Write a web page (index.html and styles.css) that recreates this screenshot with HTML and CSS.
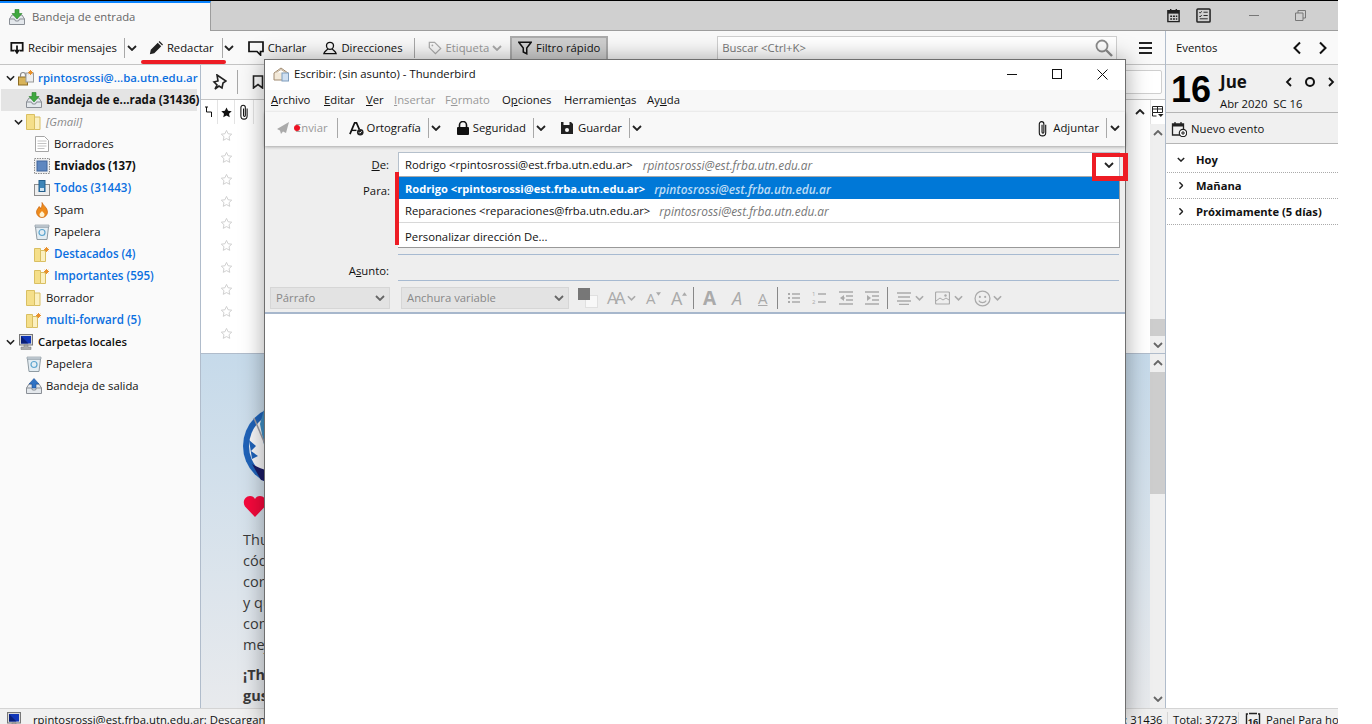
FILE: index.html
```html
<!doctype html>
<html>

	<head>
		<title>Bandeja de entrada</title>
		<meta charset="utf-8" />
		<link rel="stylesheet" href="styles.css">
	</head>

	<body>

		<svg class="sprite">
			<symbol id="chev" viewBox="0 0 10 6"><path d="M1 1l4 4 4-4" fill="none" stroke="currentColor" stroke-width="1.800"/></symbol>
			<symbol id="chevup" viewBox="0 0 10 6"><path d="M1 5l4-4 4 4" fill="none" stroke="currentColor" stroke-width="1.800"/></symbol>
			<symbol id="inbox" viewBox="0 0 16 16"><path d="M.5 10l2.500-4h10l2.500 4v5.500H.5z" fill="#e4e8ec" stroke="#8a8f96"/><path d="M.5 10h5l1 2h3l1-2h5" fill="none" stroke="#8a8f96"/><path d="M6 .5h4v4h3L8 10 3 4.500h3z" fill="#3fa83f" stroke="#2b7f2b" stroke-width=".6"/></symbol>
			<symbol id="outbox" viewBox="0 0 16 16"><path d="M.5 10l2.500-4h10l2.500 4v5.500H.5z" fill="#e4e8ec" stroke="#8a8f96"/><path d="M.5 10h5l1 2h3l1-2h5" fill="none" stroke="#8a8f96"/><path d="M6 10V6H3L8 .5 13 6h-3v4z" fill="#2f72c4" stroke="#1d4f94" stroke-width=".6"/></symbol>
			<symbol id="folder" viewBox="0 0 16 16"><path d="M.5 .5h8v15h-8z" fill="#f5df8a" stroke="#d9bf62"/><path d="M8.500 3h5.500v12.500H8.500z" fill="#fbf0c0" stroke="#d9bf62"/></symbol>
			<symbol id="vfolder" viewBox="0 0 16 16"><path d="M.5 2.500h6v13h-6z" fill="#f5df8a" stroke="#d9bf62"/><path d="M6.500 4.500h5v11h-5z" fill="#fbf0c0" stroke="#d9bf62"/><path d="M12.500 1v5M10 3.500h5M10.800 1.800l3.400 3.400M14.200 1.800l-3.400 3.400" stroke="#e8912c"/></symbol>
			<symbol id="doc" viewBox="0 0 16 16"><path d="M1.500 .5h9l4 4v11h-13z" fill="#fff" stroke="#a5a5a5"/><path d="M3.500 5h9M3.500 7.500h9M3.500 10h9M3.500 12.500h7" stroke="#c4c4c4"/></symbol>
			<symbol id="sent" viewBox="0 0 16 16"><rect x=".5" y=".5" width="15" height="15" fill="#eee" stroke="#8d8d8d" stroke-dasharray="1.500 1"/><rect x="3" y="3" width="10" height="10" fill="#5e87c0" stroke="#3f659c"/></symbol>
			<symbol id="archive" viewBox="0 0 16 16"><rect x=".5" y="4.500" width="15" height="11" fill="#eee" stroke="#8d8d8d"/><rect x="5" y=".5" width="6" height="11" fill="#3d85b8" stroke="#235f8c"/><rect x="6" y="8" width="4" height="3" fill="#cfe4f2"/></symbol>
			<symbol id="flame" viewBox="0 0 16 16"><path d="M8 .5c1 3 5.500 5 5.500 9.500a5.500 5.500 0 0 1-11 0C2.500 7.500 4.500 6.500 5 4.500c1 .5 1.500 1.500 1.500 2.500C7.500 5.500 8.500 3 8 .5z" fill="#ee8b1c" stroke="#c9640f" stroke-width=".7"/><path d="M8 9c1 1.500 2.500 2 2.500 3.500a2.500 2.500 0 0 1-5 0C5.500 11 7 10.500 8 9z" fill="#fff2d0"/></symbol>
			<symbol id="trash" viewBox="0 0 16 16"><path d="M1.500 3h13l-1.500 12.500H3z" fill="#e3edf3" stroke="#8f9ba3"/><path d="M1 1h14v2H1z" fill="#cfd9e0" stroke="#8f9ba3" stroke-width=".7"/><circle cx="8" cy="8.500" r="3" fill="none" stroke="#5ea6cf" stroke-width="1.200"/></symbol>
			<symbol id="pc" viewBox="0 0 16 16"><rect x="1.500" y=".5" width="13" height="10.500" fill="#d9d9d9" stroke="#777"/><rect x="3" y="2" width="10" height="7.500" fill="#1036b8"/><path d="M3 2l7.500 7.500H3z" fill="#0a1f78"/><path d="M6 11h4v2h3v2.500H3V13h3z" fill="#aaa" stroke="#777" stroke-width=".5"/></symbol>
			<symbol id="lockmail" viewBox="0 0 16 16"><rect x=".5" y="7" width="9" height="8" fill="#d9b45a" stroke="#8c6c24"/><path d="M2.500 7V5a2.500 2.500 0 0 1 5 0v2" fill="none" stroke="#888" stroke-width="1.200"/><rect x="8" y="3" width="7.500" height="9" fill="#eee" stroke="#999"/><path d="M12.500 0v5M10 2.500h5M10.800 .8l3.400 3.400M14.200 .8l-3.400 3.400" stroke="#e8912c"/></symbol>
			<symbol id="star" viewBox="0 0 14 14"><path d="M7 1.500l1.700 3.600 3.900.5-2.900 2.700.8 3.900L7 10.300l-3.500 1.900.8-3.900L1.400 5.600l3.900-.5z"/></symbol>
			<symbol id="clip" viewBox="0 0 12 18"><path d="M9.500 5v8.500a3.500 3.500 0 0 1-7 0V4a2.500 2.500 0 0 1 5 0v9a1 1 0 0 1-2 0V5" fill="none" stroke="currentColor" stroke-width="1.200"/></symbol>
		</svg>

		<div class="app">
			<div class="tabbar">
				<div class="tab">
					<svg class="ico16"><use href="#inbox"/></svg>
					<span>Bandeja de entrada</span>
				</div>
				<div class="tabtools">
					<svg class="ico15" viewBox="0 0 16 16"><path d="M2 3h12v11.500H2z" fill="none" stroke="#222" stroke-width="1.500"/><path d="M2 3h12v3H2z" fill="#222"/><path d="M5 1v3M11 1v3" stroke="#222" stroke-width="1.500"/><path d="M4.500 8h2v1.500h-2zM7.500 8h2v1.500h-2zM10.500 8h1.500v1.500h-1.500zM4.500 11h2v1.500h-2zM7.500 11h2v1.500h-2zM10.500 11h1.500v1.500h-1.500z" fill="#222"/></svg>
					<svg class="ico15 tasks" viewBox="0 0 16 16"><rect x="1" y="1" width="14" height="14" rx="1" fill="none" stroke="#222" stroke-width="1.600"/><path d="M3.500 4.500l1 1 1.500-2M3.500 8.500l1 1 1.500-2M8 4.500h4.500M8 8h4.500M4 11.500h8.500" fill="none" stroke="#222"/></svg>
					<span class="tab-min"></span>
					<svg class="tab-restore" viewBox="0 0 11 11"><path d="M.5 3h7.500v7.500H.5zM3 3V.5h7.500V8H8" fill="none" stroke="#777"/></svg>
				</div>
			</div>

			<div class="toolbar">
				<button class="tb ml10">
					<svg class="ico14" viewBox="0 0 16 16"><path d="M5 11H1.500V2h13v9H11" fill="none" stroke="#111" stroke-width="2"/><path d="M8 5v9" stroke="#111" stroke-width="2"/><path d="M4.500 10L8 15l3.500-5z" fill="#111"/></svg>
					Recibir mensajes
				</button>
				<i class="sep ml7"></i>
				<svg class="chev ml2"><use href="#chev"/></svg>
				<button class="tb ml12">
					<svg class="ico14" viewBox="0 0 16 16"><path d="M1 15l1-5 8-8 4 4-8 8zM11 1l1-1 4 4-1 1z" fill="#222"/></svg>
					Redactar
				</button>
				<i class="sep ml8"></i>
				<svg class="chev ml1"><use href="#chev"/></svg>
				<button class="tb ml14">
					<svg class="ico16" viewBox="0 0 16 16"><path d="M1 2h14v9.500h-2.500V15L9 11.500H1z" fill="none" stroke="#111" stroke-width="1.700"/></svg>
					Charlar
				</button>
				<button class="tb ml17">
					<svg class="ico14" viewBox="0 0 16 16"><circle cx="8" cy="5.500" r="4" fill="none" stroke="#111" stroke-width="1.500"/><path d="M5.500 9C4 11 1.500 11.500 1 14.500h14c-.5-3-3-3.500-4.500-5.500" fill="none" stroke="#111" stroke-width="1.500"/></svg>
					Direcciones
				</button>
				<i class="sep ml11"></i>
				<button class="tb off ml13">
					<svg class="ico14" viewBox="0 0 16 16"><path d="M1.500 1.500h6l7 7-6 6-7-7z" fill="none" stroke="#aaa" stroke-width="1.400"/><circle cx="5" cy="5" r="1" fill="#aaa"/></svg>
					Etiqueta
				</button>
				<svg class="chev ml3 off"><use href="#chev"/></svg>
				<button class="tb filter">
					<svg class="ico14" viewBox="0 0 16 16"><path d="M1 1.500h14L10 8v6.500l-4-2V8z" fill="none" stroke="#111" stroke-width="1.700"/></svg>
					Filtro rápido
				</button>
				<div class="search">
					<span>Buscar &lt;Ctrl+K&gt;</span>
					<svg class="ico18" viewBox="0 0 18 18"><circle cx="7" cy="7" r="5.500" fill="none" stroke="#8c8c8c" stroke-width="1.800"/><path d="M11 11l6 6" stroke="#8c8c8c" stroke-width="2.400"/></svg>
				</div>
				<div class="burger"><i></i><i></i><i></i></div>
			</div>

			<div class="main">
				<div class="sidebar">
					<div class="row blue account indent0"><svg class="chev tw"><use href="#chev"/></svg><svg class="ico16"><use href="#lockmail"/></svg><span>rpintosrossi@...ba.utn.edu.ar</span></div>
					<div class="row sel indent1"><svg class="ico16"><use href="#inbox"/></svg><span class="b">Bandeja de e...rada (31436)</span></div>
					<div class="row indent0b"><svg class="chev tw"><use href="#chev"/></svg><svg class="ico16"><use href="#folder"/></svg><span class="gm">[Gmail]</span></div>
					<div class="row indent2"><svg class="ico16"><use href="#doc"/></svg><span>Borradores</span></div>
					<div class="row indent2"><svg class="ico16"><use href="#sent"/></svg><span class="b">Enviados (137)</span></div>
					<div class="row indent2 blue"><svg class="ico16"><use href="#archive"/></svg><span>Todos (31443)</span></div>
					<div class="row indent2"><svg class="ico16"><use href="#flame"/></svg><span>Spam</span></div>
					<div class="row indent2"><svg class="ico16"><use href="#trash"/></svg><span>Papelera</span></div>
					<div class="row indent2 blue"><svg class="ico16"><use href="#vfolder"/></svg><span>Destacados (4)</span></div>
					<div class="row indent2 blue"><svg class="ico16"><use href="#vfolder"/></svg><span>Importantes (595)</span></div>
					<div class="row indent1"><svg class="ico16"><use href="#folder"/></svg><span>Borrador</span></div>
					<div class="row indent1 blue"><svg class="ico16"><use href="#vfolder"/></svg><span>multi-forward (5)</span></div>
					<div class="row indent0 local"><svg class="chev tw"><use href="#chev"/></svg><svg class="ico16"><use href="#pc"/></svg><span>Carpetas locales</span></div>
					<div class="row indent1"><svg class="ico16"><use href="#trash"/></svg><span>Papelera</span></div>
					<div class="row indent1"><svg class="ico16"><use href="#outbox"/></svg><span>Bandeja de salida</span></div>
				</div>

				<div class="content">
					<div class="threads">
						<div class="qfbar">
							<svg class="ico16 pin" viewBox="0 0 16 16"><path d="M6 1l9 6-3 2-1 5-3-2-4 3 2-4-3-3 4-1z" fill="none" stroke="#222" stroke-width="1.600"/></svg>
							<i class="sep qfsep"></i>
							<svg class="ico14 mark" viewBox="0 0 14 14"><path d="M2.500 1h9v12L7 9.500 2.500 13z" fill="none" stroke="#222" stroke-width="1.600"/></svg>
							<div class="qfsearch"></div>
						</div>
						<div class="thead">
							<span class="col c1">
								<svg class="ico10" viewBox="0 0 10 12"><path d="M2.500 1v5h5v5M1 1h3" fill="none" stroke="#111"/></svg>
							</span>
							<span class="col c2"><svg class="ico13 starfull"><use href="#star"/></svg></span>
							<span class="col c3"><svg class="clip12"><use href="#clip"/></svg></span>
							<span class="thead-fill">
								<svg class="chev"><use href="#chevup"/></svg>
							</span>
							<span class="col c4">
								<svg class="ico12" viewBox="0 0 12 12"><path d="M.5 .5h10v6H.5zM.5 3h10M5.500 .5v6M.5 6.500V10h4" fill="none" stroke="#222"/><path d="M6 8h5.500l-2.700 3z" fill="#222"/></svg>
							</span>
						</div>
						<div class="tbody">
							<div class="starcol">
								<svg class="ico13 st"><use href="#star"/></svg>
								<svg class="ico13 st"><use href="#star"/></svg>
								<svg class="ico13 st"><use href="#star"/></svg>
								<svg class="ico13 st"><use href="#star"/></svg>
								<svg class="ico13 st"><use href="#star"/></svg>
								<svg class="ico13 st"><use href="#star"/></svg>
								<svg class="ico13 st"><use href="#star"/></svg>
								<svg class="ico13 st"><use href="#star"/></svg>
								<svg class="ico13 st"><use href="#star"/></svg>
								<svg class="ico13 st"><use href="#star"/></svg>
							</div>
							<div class="vscroll short">
								<svg class="chev"><use href="#chevup"/></svg>
								<div class="track"><div class="thumb"></div></div>
								<svg class="chev"><use href="#chev"/></svg>
							</div>
						</div>
					</div>

					<div class="message">
						<div class="msgbody">
							<svg class="logo" viewBox="0 0 84 84">
								<circle cx="40" cy="42" r="40" fill="#1f62b8"/>
								<circle cx="40" cy="42" r="34" fill="#f6f6f8"/>
								<path d="M22 2L17 20l5 26z" fill="#3f8fc4"/>
								<path d="M11 14l11 26" stroke="#9a9aa4" stroke-width="1.500"/>
								<path d="M6 36l7 6-5 5 7 5-6 3z" fill="#1f62b8"/>
								<path d="M9 60c10 6 22 9 40 8L40 82 18 76z" fill="#1c1c66"/>
							</svg>
							<svg class="heart" viewBox="0 0 24 22"><path d="M12 21L2 10.500C-1 6 2 0 7 0c2.500 0 4 1 5 3 1-2 2.500-3 5-3 5 0 8 6 5 10.500z" fill="#f5093c"/></svg>
							<p>Thunderbird es el software de correo libre<br>código abierto, multiplataforma y gratuito<br>correo electrónico respaldado por miles de<br>y que depende de las contribuciones de la<br>comunidad para seguir mejorando cada<br>mejor experiencia posible para todos</p>
							<p class="strong">¡Thunderbird solo existe gracias a ti! Si te<br>gusta, considera hacer una donación</p>
						</div>
						<div class="vscroll">
							<svg class="chev"><use href="#chevup"/></svg>
							<div class="track"><div class="thumb"></div></div>
							<svg class="chev"><use href="#chev"/></svg>
						</div>
					</div>
				</div>

				<div class="today">
					<div class="today-head">
						<span>Eventos</span>
						<svg class="nav nav1" viewBox="0 0 10 14"><path d="M8 1.500L2.500 7 8 12.500" fill="none" stroke="#111" stroke-width="2"/></svg>
						<svg class="nav nav2" viewBox="0 0 10 14"><path d="M2 1.500L7.500 7 2 12.500" fill="none" stroke="#111" stroke-width="2"/></svg>
					</div>
					<div class="today-date">
						<span class="bignum">16</span>
						<div class="datecol">
							<div class="dayrow">
								<span class="dayname">Jue</span>
								<span class="daynav">
									<svg viewBox="0 0 8 10"><path d="M6 1L2 5l4 4" fill="none" stroke="#111" stroke-width="1.800"/></svg>
									<i class="dot"></i>
									<svg viewBox="0 0 8 10"><path d="M2 1l4 4-4 4" fill="none" stroke="#111" stroke-width="1.800"/></svg>
								</span>
							</div>
							<span class="monthrow">Abr 2020&nbsp; SC 16</span>
						</div>
					</div>
					<div class="newevent">
						<svg class="ico16" viewBox="0 0 16 16"><path d="M1.500 3h11v11H1.500z" fill="none" stroke="#222" stroke-width="1.300"/><path d="M1.500 3h11v2.500h-11z" fill="#222"/><path d="M4 1v3M10 1v3" stroke="#222" stroke-width="1.300"/><circle cx="12" cy="12" r="3.700" fill="#fff" stroke="#222" stroke-width="1.200"/><path d="M12 10v4M10 12h4" stroke="#222"/></svg>
						<span>Nuevo evento</span>
					</div>
					<div class="agenda">
						<div class="agenda-row"><svg class="chev small"><use href="#chev"/></svg><span>Hoy</span></div>
						<div class="agenda-row"><svg class="chev small side"><use href="#chev"/></svg><span>Mañana</span></div>
						<div class="agenda-row"><svg class="chev small side"><use href="#chev"/></svg><span>Próximamente (5 días)</span></div>
					</div>
				</div>
			</div>

			<div class="status">
				<svg class="ico16 st-pc"><use href="#pc"/></svg>
				<span class="st-text">rpintosrossi@est.frba.utn.edu.ar: Descargando mensajes</span>
				<span class="st-cell st-unread">No leídos: 31436</span>
				<span class="st-cell st-total">Total: 37273</span>
				<span class="st-cell st-panel">
					<svg class="ico16" viewBox="0 0 16 16"><path d="M3 2H1.500v12.500H3M13 2h1.500v12.500H13M4 1.500h8" fill="none" stroke="#222" stroke-width="1.400"/><text x="8" y="13" font-size="9" font-weight="700" text-anchor="middle" fill="#222">16</text></svg>
					Panel Para hoy
				</span>
			</div>

			<div class="mark-under"></div>
		</div>

		<div class="compose">
			<div class="c-title">
				<svg class="ico16" viewBox="0 0 16 16"><path d="M1 7l7-5 7 5v7H1z" fill="#f3e9d8" stroke="#a08a70"/><path d="M3.500 6.500L8 3.500l4.500 3" fill="#fff" stroke="#c4b49c"/><rect x="9" y="7" width="6.500" height="8" fill="#cfe0f2" stroke="#7f9dbd"/></svg>
				<span class="c-caption">Escribir: (sin asunto) - Thunderbird</span>
				<span class="w-min"></span>
				<span class="w-max"></span>
				<svg class="w-close" viewBox="0 0 11 11"><path d="M.5 .5l10 10M10.500 .5l-10 10" stroke="#111"/></svg>
			</div>
			<div class="c-menu">
				<span class="m1"><u>A</u>rchivo</span>
				<span class="m2"><u>E</u>ditar</span>
				<span class="m3"><u>V</u>er</span>
				<span class="m4 dim"><u>I</u>nsertar</span>
				<span class="m5 dim">F<u>o</u>rmato</span>
				<span class="m6">O<u>p</u>ciones</span>
				<span class="m7">Herramien<u>t</u>as</span>
				<span class="m8">Ay<u>u</u>da</span>
			</div>
			<div class="c-tools">
				<button class="tb off send">
					<svg class="ico14" viewBox="0 0 14 14"><path d="M13 1L1 8l3 1.500L5 13l2-2.500 3 1.500z" fill="#aaa"/></svg>
					Enviar
				</button>
				<i class="sep s1"></i>
				<button class="tb spell">
					<svg class="ico15" viewBox="0 0 16 16"><path d="M1 14L6 2h2l3 7" fill="none" stroke="#111" stroke-width="1.800"/><path d="M3 10h5" stroke="#111" stroke-width="1.500"/><circle cx="12" cy="12" r="3.500" fill="#222"/><path d="M10.500 12l1 1 2-2" fill="none" stroke="#fff"/></svg>
					Ortografía
				</button>
				<i class="sep s2"></i>
				<svg class="chev ml2"><use href="#chev"/></svg>
				<button class="tb secu">
					<svg class="ico14" viewBox="0 0 14 14"><rect x="1" y="6" width="12" height="8" rx="1" fill="#111"/><path d="M3.500 6V4a3.500 3.500 0 0 1 7 0v2" fill="none" stroke="#111" stroke-width="1.600"/></svg>
					Seguridad
				</button>
				<i class="sep s3"></i>
				<svg class="chev ml2"><use href="#chev"/></svg>
				<button class="tb save">
					<svg class="ico14" viewBox="0 0 14 14"><path d="M1 1h10l2 2v10H1z" fill="#222"/><rect x="3.500" y="1" width="6" height="3" fill="#f9f9f9"/><circle cx="7" cy="9" r="2" fill="#f9f9f9"/></svg>
					Guardar
				</button>
				<i class="sep s4"></i>
				<svg class="chev ml2"><use href="#chev"/></svg>
				<button class="tb attach">
					<svg class="clip16"><use href="#clip"/></svg>
					Adjuntar
				</button>
				<i class="sep s5"></i>
				<svg class="chev ml3 last-chev"><use href="#chev"/></svg>
				<i class="reddot"></i>
			</div>

			<div class="c-head">
				<div class="h-row h-from">
					<label class="h-label"><u>D</u>e:</label>
					<div class="from-field">
						<span class="fname">Rodrigo &lt;rpintosrossi@est.frba.utn.edu.ar&gt;</span>
						<em>rpintosrossi@est.frba.utn.edu.ar</em>
						<svg class="chev from-chev"><use href="#chev"/></svg>
					</div>
				</div>
				<div class="h-row h-to">
					<label class="h-label para">Para:</label>
				</div>
				<div class="h-line line1"></div>
				<div class="h-row h-subj">
					<label class="h-label">A<u>s</u>unto:</label>
				</div>
				<div class="h-line"></div>

				<div class="popup">
					<div class="pitem on"><span>Rodrigo &lt;rpintosrossi@est.frba.utn.edu.ar&gt;</span><em>rpintosrossi@est.frba.utn.edu.ar</em></div>
					<div class="pitem second"><span>Reparaciones &lt;reparaciones@frba.utn.edu.ar&gt;</span><em>rpintosrossi@est.frba.utn.edu.ar</em></div>
					<div class="pitem last"><span>Personalizar dirección De...</span></div>
				</div>
			</div>

			<div class="c-format">
				<div class="fsel w120"><span>Párrafo</span><svg class="chev"><use href="#chev"/></svg></div>
				<div class="fsel w168"><span>Anchura variable</span><svg class="chev"><use href="#chev"/></svg></div>
				<div class="colors"><i class="bg"></i><i class="fg"></i></div>
				<span class="fa size1">AA</span><svg class="chev mini"><use href="#chev"/></svg>
				<span class="fa size2">A<svg class="tri" viewBox="0 0 6 4"><path d="M0 0h6L3 4z"/></svg></span>
				<span class="fa size3">A<svg class="tri" viewBox="0 0 6 4"><path d="M0 4h6L3 0z"/></svg></span>
				<i class="fsep fs1"></i>
				<span class="fa bold">A</span>
				<span class="fa ital">A</span>
				<span class="fa und">A</span>
				<i class="fsep fs2"></i>
				<svg class="fic l1" viewBox="0 0 14 14"><path d="M1 2h2v2H1zM1 6h2v2H1zM1 10h2v2H1z" fill="#aaa"/><path d="M5 3h8M5 7h8M5 11h8" stroke="#aaa" stroke-width="1.600"/></svg>
				<svg class="fic l2" viewBox="0 0 15 14"><path d="M6 3h8M6 11h8" stroke="#aaa" stroke-width="1.600"/><text x="0" y="5" font-size="6" fill="#aaa">1</text><text x="0" y="13" font-size="6" fill="#aaa">2</text></svg>
				<svg class="fic l3" viewBox="0 0 14 14"><path d="M0 1h14M7 5h7M7 9h7M0 13h14" stroke="#aaa" stroke-width="1.500"/><path d="M5 4L1 7l4 3z" fill="#aaa"/><path d="M3 7h3" stroke="#aaa"/></svg>
				<svg class="fic l4" viewBox="0 0 14 14"><path d="M0 1h14M7 5h7M7 9h7M0 13h14" stroke="#aaa" stroke-width="1.500"/><path d="M2 4l4 3-4 3z" fill="#aaa"/></svg>
				<i class="fsep fs3"></i>
				<svg class="fic l5" viewBox="0 0 14 14"><path d="M0 2h14M1 6h12M0 10h14M2 13.500h10" stroke="#aaa" stroke-width="1.500"/></svg>
				<svg class="chev mini m5c"><use href="#chev"/></svg>
				<svg class="fic l6" viewBox="0 0 15 14"><rect x=".5" y="1" width="14" height="12" rx="1" fill="none" stroke="#aaa" stroke-width="1.200"/><path d="M1 10l4-3 3 2 3-2 3 2" fill="none" stroke="#aaa"/><circle cx="10.500" cy="4.500" r="1.200" fill="#aaa"/></svg>
				<svg class="chev mini m5c"><use href="#chev"/></svg>
				<svg class="fic l7" viewBox="0 0 16 16"><circle cx="8" cy="8" r="7" fill="none" stroke="#aaa" stroke-width="1.200"/><circle cx="5.500" cy="6.500" r="1" fill="#aaa"/><circle cx="10.500" cy="6.500" r="1" fill="#aaa"/><path d="M4.500 10c1.500 2.500 5.500 2.500 7 0" fill="none" stroke="#aaa"/></svg>
				<svg class="chev mini"><use href="#chev"/></svg>
			</div>
			<div class="c-editor"></div>
		</div>

		<div class="mark-bar"></div>
		<div class="mark-box"></div>

	</body>

</html>
```

FILE: styles.css
```css
* {
	box-sizing: border-box;
}

html,
body {
	margin: 0;
	height: 724px;
	overflow: hidden;
	background: #fff;
}

body {
	font: 11.3px/16px "Open Sans", "Noto Sans", sans-serif;
	color: #111;
	position: relative;
}

.sprite {
	display: none;
}

button {
	font: inherit;
	color: inherit;
	background: none;
	border: 0;
	padding: 0;
}

u {
	text-underline-offset: 1px;
}

em {
	color: #777;
	font-size: 11.9px;
}

svg {
	flex: none;
}

.ico10 { width: 10px; height: 12px; }
.ico12 { width: 12px; height: 12px; }
.ico13 { width: 13px; height: 13px; }
.ico14 { width: 14px; height: 14px; }
.ico15 { width: 15px; height: 15px; }
.ico16 { width: 16px; height: 16px; }
.ico18 { width: 18px; height: 18px; }

.chev {
	width: 10px;
	height: 6px;
	color: #222;
}

.chev.off {
	color: #aaa;
}

.ml1 { margin-left: 1px; }
.ml2 { margin-left: 2px; }
.ml3 { margin-left: 3px; }
.ml7 { margin-left: 7px; }
.ml8 { margin-left: 8px; }
.ml10 { margin-left: 10px; }
.ml11 { margin-left: 11px; }
.ml12 { margin-left: 12px; }
.ml13 { margin-left: 13px; }
.ml14 { margin-left: 14px; }
.ml17 { margin-left: 17px; }

.sep {
	display: block;
	width: 1px;
	height: 20px;
	background: #a8a8a8;
	flex: none;
}

.app {
	width: 1338px;
	height: 724px;
	display: flex;
	flex-direction: column;
	border-top: 1px solid #000;
	position: relative;
	overflow: hidden;
}

/* tabs */
.tabbar {
	height: 30px;
	background: #d0d0d0;
	border-bottom: 1px solid #9d9d9d;
	display: flex;
	flex: none;
}

.tab {
	width: 211px;
	height: 30px;
	background: #f9f9f9;
	border-top: 2px solid #0a84ff;
	border-right: 1px solid #9d9d9d;
	display: flex;
	align-items: center;
	padding: 0 0 1px 9px;
	gap: 7px;
	color: #666;
}

.tabtools {
	flex: 1;
	display: flex;
	align-items: center;
	justify-content: flex-start;
	padding-left: 955px;
}

.tasks {
	margin-left: 15px;
}

.tab-min {
	width: 10px;
	height: 1px;
	background: #777;
	margin-left: 38px;
}

.tab-restore {
	width: 11px;
	height: 11px;
	margin-left: 36px;
}

/* main toolbar */
.toolbar {
	height: 34px;
	flex: none;
	background: #f9f9f9;
	border-bottom: 1px solid #c4c4c4;
	display: flex;
	align-items: center;
}

.tb {
	display: flex;
	align-items: center;
	gap: 4px;
	white-space: nowrap;
	flex: none;
}

.off {
	color: #999;
}

.filter {
	margin-left: 8px;
	width: 98px;
	height: 24px;
	justify-content: center;
	background: #cfcfcf;
	border: 2px solid #ababab;
	border-bottom: 1px solid #ababab;
}

.search {
	margin-left: 109px;
	width: 400px;
	height: 24px;
	background: #fff;
	border: 1px solid #cfcfcf;
	border-bottom: 0;
	display: flex;
	align-items: center;
	justify-content: space-between;
	padding: 0 3px 0 4px;
	color: #777;
}

.burger {
	margin-left: 22px;
	width: 13px;
	display: flex;
	flex-direction: column;
	gap: 3px;
}

.burger i {
	height: 2px;
	background: #222;
}

.main {
	flex: 1;
	display: flex;
	min-height: 0;
}

/* folders */
.sidebar {
	width: 201px;
	flex: none;
	background: #fafafa;
	border-right: 1px solid #b0bccb;
	padding-top: 2px;
	white-space: nowrap;
	overflow: hidden;
}

.row {
	height: 22px;
	display: flex;
	align-items: center;
	gap: 4px;
}

.tw {
	margin: 0 -1px 0 6px;
	width: 9px;
}

.indent0 { padding-left: 0; }
.indent0b { padding-left: 8px; }
.indent1 { padding-left: 26px; }
.indent2 { padding-left: 34px; }

.blue {
	color: #0a6fe0;
	font-weight: 600;
	font-size: 11.6px;
}

.account {
	font-size: 11.4px;
}

.strong,
.b {
	font-weight: 700;
	font-size: 11.5px;
}

.local {
	font-weight: 600;
}

.sel {
	background: #e4e4e4;
	margin: 0 3px 0 1px;
	padding-left: 25px;
}

.gm {
	font-style: italic;
	color: #888;
}

/* threads + message */
.content {
	flex: 1;
	display: flex;
	flex-direction: column;
	min-width: 0;
}

.threads {
	height: 289px;
	flex: none;
	background: #fff;
	display: flex;
	flex-direction: column;
	border-bottom: 1px solid #b0bccb;
}

.qfbar {
	height: 35px;
	flex: none;
	background: #f9f9f9;
	border-bottom: 1px solid #c4c4c4;
	display: flex;
	align-items: center;
	padding-left: 10px;
}

.qfsep {
	margin-left: 10px;
	height: 24px;
}

.mark {
	margin-left: 13px;
}

.qfsearch {
	margin-left: auto;
	margin-right: 3px;
	width: 300px;
	height: 24px;
	background: #fff;
	border: 1px solid #cfcfcf;
	border-radius: 2px;
}

.thead {
	height: 24px;
	flex: none;
	display: flex;
	align-items: center;
}

.col {
	height: 24px;
	display: flex;
	align-items: center;
	justify-content: center;
	border-right: 1px solid #e3e3e3;
	flex: none;
}

.c1 { width: 17px; }
.c2 { width: 17px; }
.c3 { width: 19px; }
.c4 { width: 15px; border-right: 0; border-left: 1px solid #e3e3e3; }

.thead-fill {
	flex: 1;
	display: flex;
	justify-content: flex-end;
	padding-right: 5px;
}

.clip12 {
	width: 12px;
	height: 16px;
}

.starfull {
	fill: #111;
}

.tbody {
	flex: 1;
	display: flex;
	min-height: 0;
}

.starcol {
	flex: 1;
	padding: 5px 0 0 19px;
	display: flex;
	flex-direction: column;
	gap: 9px;
	overflow: hidden;
}

.st {
	fill: #fff;
	stroke: #ccc;
}

.vscroll {
	width: 15px;
	flex: none;
	background: #efefef;
	display: flex;
	flex-direction: column;
	align-items: center;
	padding: 6px 0;
	gap: 6px;
}

.vscroll .chev {
	color: #666;
}

.track {
	flex: 1;
	width: 15px;
}

.thumb {
	background: #cdcdcd;
	height: 122px;
}

.short .thumb {
	height: 17px;
	margin-top: 177px;
}

.message {
	flex: 1;
	display: flex;
	min-height: 0;
	background: linear-gradient(#c6daea, #e8eaed);
}

.msgbody {
	flex: 1;
	padding: 50px 0 0 42px;
	overflow: hidden;
	white-space: nowrap;
	font-size: 14.5px;
	line-height: 21px;
	color: #3a3a3a;
}

.logo {
	width: 84px;
	height: 84px;
	display: block;
}

.heart {
	width: 24px;
	height: 22px;
	display: block;
	margin-top: 8px;
}

.msgbody p {
	margin: 11px 0 0;
}

.msgbody p.strong {
	margin-top: 9px;
	font-size: 14.5px;
}

/* today pane */
.today {
	width: 173px;
	flex: none;
	background: #fff;
	border-left: 1px solid #b0bccb;
	margin-top: -34px;
	position: relative;
	display: flex;
	flex-direction: column;
}

.today-head {
	height: 34px;
	flex: none;
	background: #f9f9f9;
	border-bottom: 1px solid #c4c4c4;
	display: flex;
	align-items: center;
	padding-left: 10px;
}

.nav {
	width: 10px;
	height: 14px;
}

.nav1 {
	margin-left: 75px;
}

.nav2 {
	margin-left: 16px;
}

.today-date {
	height: 48px;
	flex: none;
	background: #f0f0f0;
	border-bottom: 1px solid #b5b5b5;
	display: flex;
	padding-left: 5px;
}

.bignum {
	font: 700 36px/50px "Liberation Sans", sans-serif;
	color: #000;
	width: 48px;
	flex: none;
}

.datecol {
	flex: 1;
	display: flex;
	flex-direction: column;
	padding: 5px 0 0 1px;
}

.dayrow {
	display: flex;
	align-items: center;
	justify-content: space-between;
	height: 23px;
}

.dayname {
	font-size: 17px;
	font-weight: 700;
}

.daynav {
	display: flex;
	align-items: center;
	gap: 12px;
	padding-right: 3px;
}

.daynav svg {
	width: 8px;
	height: 10px;
}

.dot {
	width: 10px;
	height: 10px;
	border: 2px solid #111;
	border-radius: 50%;
}

.monthrow {
	margin-top: 3px;
}

.newevent {
	height: 31px;
	flex: none;
	background: #f0f0f0;
	border-bottom: 1px solid #b5b5b5;
	display: flex;
	align-items: center;
	padding: 2px 0 0 5px;
	gap: 4px;
}

.agenda {
	padding: 3px 0 0 1px;
}

.agenda-row {
	height: 26px;
	display: flex;
	align-items: center;
	padding: 0 0 0 10px;
	gap: 11px;
	font-weight: 700;
	font-size: 11.2px;
	border-bottom: 1px dotted #aaa;
}

.small {
	width: 8px;
	height: 5px;
}

.side {
	transform: rotate(-90deg);
}

/* status */
.status {
	height: 16px;
	flex: none;
	background: #f0f0f0;
	border-top: 1px solid #d4d4d4;
	display: flex;
	align-items: flex-start;
	padding-top: 3px;
	white-space: nowrap;
	overflow: hidden;
}

.st-pc {
	margin: 0 0 0 6px;
}

.st-text {
	margin-left: 11px;
	width: 1036px;
	flex: none;
}

.st-cell {
	display: flex;
	align-items: center;
	gap: 5px;
	flex: none;
}

.st-unread {
	width: 98px;
	padding-left: 6px;
}

.st-total {
	width: 71px;
	padding-left: 5px;
	border-left: 1px solid #d4d4d4;
}

.st-panel {
	padding-left: 6px;
	border-left: 1px solid #d4d4d4;
}

/* compose window */
.compose {
	position: absolute;
	left: 264px;
	top: 59px;
	width: 862px;
	height: 665px;
	background: #eee;
	border: 1px solid #6e6e6e;
	border-bottom: 0;
	box-shadow: 0 0 22px rgba(0, 0, 0, 0.35);
	display: flex;
	flex-direction: column;
}

.c-title {
	height: 30px;
	flex: none;
	background: #fff;
	display: flex;
	align-items: center;
	padding: 0 0 2px 8px;
}

.c-caption {
	margin-left: 5px;
}

.w-min {
	width: 10px;
	height: 1px;
	background: #111;
	margin-left: auto;
}

.w-max {
	width: 10px;
	height: 10px;
	border: 1px solid #111;
	margin-left: 35px;
}

.w-close {
	width: 11px;
	height: 11px;
	margin: 0 17px 0 35px;
}

.c-menu {
	height: 22px;
	flex: none;
	background: #f8f8f8;
	display: flex;
	align-items: center;
	padding: 0 0 2px 6px;
}

.m1 { width: 53px; }
.m2 { width: 42px; }
.m3 { width: 28px; }
.m4 { width: 51px; }
.m5 { width: 57px; }
.m6 { width: 62px; }
.m7 { width: 83px; }

.dim {
	color: #999;
}

.c-tools {
	height: 34px;
	flex: none;
	background: #f8f8f8;
	box-shadow: 0 1px 3px rgba(0, 0, 0, 0.3);
	display: flex;
	align-items: center;
	padding-bottom: 2px;
	position: relative;
	z-index: 1;
}

.send {
	margin-left: 11px;
	gap: 5px;
}

.s1 { margin-left: 9px; }
.spell { margin-left: 11px; gap: 3px; }
.s2 { margin-left: 7px; }
.secu { margin-left: 15px; gap: 3px; }
.s3 { margin-left: 7px; }
.save { margin-left: 14px; }
.s4 { margin-left: 7px; }
.attach { margin-left: auto; gap: 5px; }
.s5 { margin-left: 7px; }

.clip16 {
	width: 11px;
	height: 17px;
}

.last-chev {
	margin-right: 5px;
}

.reddot {
	position: absolute;
	left: 29px;
	top: 13px;
	width: 6px;
	height: 6px;
	border-radius: 50%;
	background: #ee1122;
}

.c-head {
	height: 141px;
	flex: none;
	background: #eee;
	position: relative;
	padding-top: 6px;
}

.h-row {
	display: flex;
	align-items: center;
}

.h-label {
	width: 124px;
	margin-right: 1px;
	text-align: right;
}

.h-from {
	height: 26px;
}

.from-field {
	margin-left: 8px;
	width: 722px;
	height: 26px;
	background: #fff;
	border: 1px solid #b5c0cc;
	border-bottom: 2px solid #aaa;
	display: flex;
	align-items: center;
	padding-left: 6px;
	white-space: nowrap;
}

.from-field em {
	margin-left: 10px;
}

.from-chev {
	margin-left: auto;
	margin-right: 5px;
}

.h-to {
	height: 26px;
}

.para {
	width: 125px;
}

.h-line {
	width: 721px;
	height: 1px;
	background: #a7bad1;
	margin-left: 133px;
}

.line1 {
	margin-top: 50px;
}

.h-subj {
	height: 25px;
	padding-top: 6px;
}

.popup {
	position: absolute;
	left: 133px;
	top: 31px;
	width: 722px;
	height: 71px;
	background: #fff;
	border-right: 1px solid #999;
	border-bottom: 1px solid #999;
	white-space: nowrap;
}

.pitem {
	padding-left: 7px;
	display: flex;
	align-items: center;
}

.pitem em {
	margin-left: 9px;
}

.on {
	height: 22px;
	padding-top: 2px;
	background: #0078d7;
	color: #fff;
	font-weight: 700;
	font-size: 11.15px;
}

.on em {
	color: #bcdcf5;
	font-weight: 600;
}

.second {
	height: 24px;
	border-bottom: 1px solid #d8d8d8;
}

.last {
	height: 24px;
	padding-top: 3px;
}

.c-format {
	height: 25px;
	flex: none;
	background: #eee;
	display: flex;
	align-items: center;
	padding-bottom: 3px;
	color: #aaa;
}

.fsel {
	height: 22px;
	background: #e3e3e3;
	border: 1px solid #d6d6d6;
	display: flex;
	align-items: center;
	justify-content: space-between;
	padding: 0 4px 0 5px;
	color: #888;
	margin-left: 5px;
}

.fsel .chev {
	color: #666;
}

.w120 { width: 120px; }
.w168 { width: 168px; margin-left: 11px; }

.colors {
	position: relative;
	width: 20px;
	height: 20px;
	margin-left: 9px;
}

.bg {
	position: absolute;
	left: 7px;
	top: 7px;
	width: 13px;
	height: 13px;
	background: #f8f8f8;
	border: 1px solid #e0e0e0;
}

.fg {
	position: absolute;
	left: 0;
	top: 0;
	width: 12px;
	height: 12px;
	background: #777;
}

.fa {
	flex: none;
	line-height: 20px;
	display: flex;
	align-items: flex-start;
}

.tri {
	width: 5px;
	height: 4px;
	margin-top: 4px;
	fill: #aaa;
}

.size1 { font-size: 17px; margin-left: 9px; letter-spacing: -3px; width: 18px; }
.size2 { font-size: 15px; margin-left: 10px; width: 14px; }
.size3 { font-size: 18px; margin-left: 11px; width: 15px; }
.fsep {
	display: block;
	width: 1px;
	height: 22px;
	background: #888;
	flex: none;
}
.fs1 { margin-left: 7px; }
.bold { font-size: 19px; font-weight: 700; margin-left: 9px; width: 14px; }
.ital { font-size: 18px; font-style: italic; margin-left: 15px; width: 12px; }
.und { font-size: 15px; text-decoration: underline; margin-left: 14px; width: 11px; }
.fs2 { margin-left: 8px; }
.fs3 { margin-left: 8px; }

.mini {
	width: 9px;
	height: 6px;
	color: #aaa;
	margin-left: 2px;
}

.fic {
	width: 14px;
	height: 14px;
}

.l1 { margin-left: 9px; }
.l2 { margin-left: 11px; width: 15px; }
.l3 { margin-left: 12px; }
.l4 { margin-left: 12px; }
.l5 { margin-left: 9px; }
.l6 { margin-left: 11px; width: 15px; }
.l7 { margin-left: 11px; width: 17px; height: 17px; }
.m5c { margin-left: 4px; }

.c-editor {
	flex: 1;
	background: #fff;
	border-top: 2px solid #a7b7cc;
}

/* red marks drawn over the screenshot */
.mark-under {
	position: absolute;
	left: 141px;
	top: 59px;
	width: 85px;
	height: 4px;
	border-radius: 2px;
	background: #ed1c24;
	z-index: 2;
}

.mark-bar {
	position: absolute;
	left: 395px;
	top: 172px;
	width: 4px;
	height: 73px;
	background: #ed1c24;
}

.mark-box {
	position: absolute;
	left: 1092px;
	top: 153px;
	width: 36px;
	height: 28px;
	border: 4px solid #ed1c24;
	border-right-width: 5px;
	border-bottom-width: 5px;
}
```
